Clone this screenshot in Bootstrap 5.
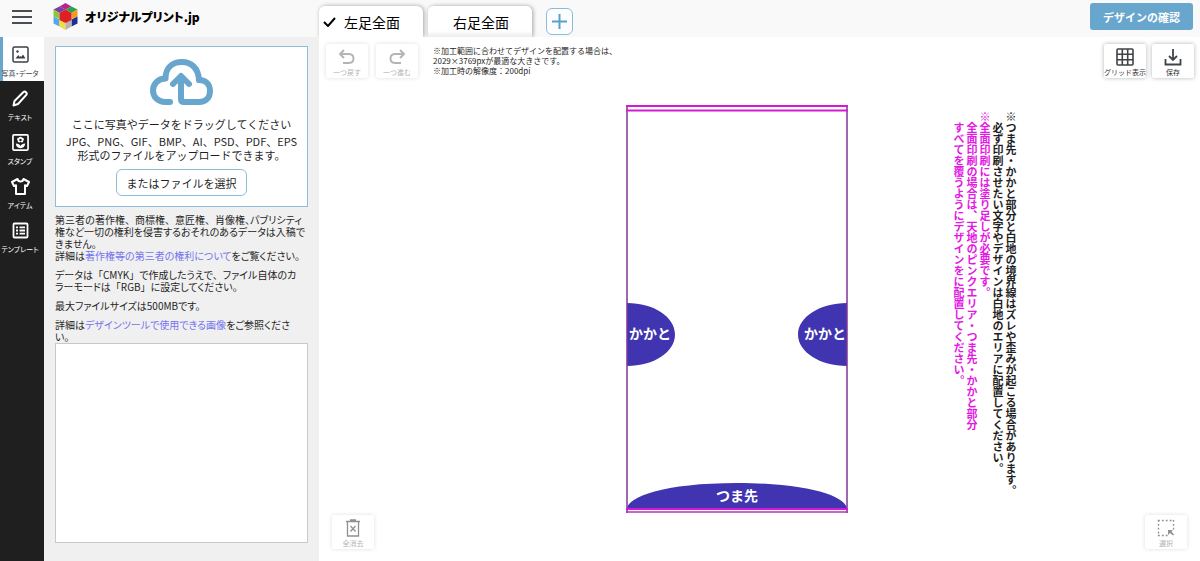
<!DOCTYPE html>
<html lang="ja">
<head>
<meta charset="utf-8">
<meta name="viewport" content="width=device-width, initial-scale=1">
<title>デザインツール | オリジナルプリント.jp</title>
<link href="https://cdn.jsdelivr.net/npm/bootstrap@5.3.0/dist/css/bootstrap.min.css" rel="stylesheet">
<style>
  :root { --accent: #68a6cd; --ink: #1f1f1f; --pink: #e31ae3; }
  body { font-family: "Noto Sans CJK JP", sans-serif; font-size: 11px; line-height: 14px; color: var(--ink); }
  svg { display: block; flex-shrink: 0; }
  button { color: inherit; }
  .topbar { background: #f9f9f9; height: 37px; }
  .brand-side { width: 319px; padding-left: 12px; }
  .brand-name { font-size: 12px; font-weight: 900; line-height: 16px; font-feature-settings: "palt"; color: #000; }
  .menu-btn { width: 20px; height: 14px; margin-top: 10px; }
  .logo-link { margin-left: 21px; margin-top: 3px; gap: 7px; }
  .tab-row { gap: 5px; }
  .design-tab { width: 104px; height: 31px; background: #fff; border: 0; border-radius: 6px 6px 0 0; box-shadow: 1px 0 4px rgba(0,0,0,.35); font-size: 14px; line-height: 20px; padding: 1px 0 0 4px; clip-path: inset(-5px -6px 0 -6px); color: #000; }
  .design-tab[aria-selected="false"] { background: linear-gradient(#fff 80%, #ececec); padding-left: 2px; }
  .add-tab { width: 27px; height: 27px; border: 1px solid #8bbdd9; border-radius: 6px; background: #fbfdfe; margin: 0 0 2px 9px; }
  .confirm-btn { background: var(--accent); color: #fff; font-size: 11px; font-weight: 700; line-height: 14px; width: 103px; height: 27px; border-radius: 3px; margin: 3px 7px 0 0; }
  .confirm-btn:hover { background: #4f93bd; color: #fff; }
  .rail { width: 44px; background: #1f1f1f; }
  .rail-item { height: 44px; padding: 9px 4px 0 0; border: 0; background: none; color: #fff; font-size: 7px; line-height: 9px; font-feature-settings: "palt"; gap: 6px; white-space: nowrap; }
  .rail-item.active { background: #fff; color: #3b3f44; box-shadow: inset 3px 0 var(--accent); }
  .side-panel { width: 275px; background: #f0f0f0; padding: 9px 11px 18px; }
  .drop-zone { background: #fff; border: 1px solid #8dbfd9; height: 161px; padding-top: 11px; }
  .drop-title { margin-top: 11px; }
  .drop-types { margin-top: 3px; white-space: nowrap; }
  .file-btn { width: 131px; height: 27px; border: 1px solid #8dbfd9; border-radius: 6px; background: #fff; margin-top: 7px; }
  .notes { font-size: 10px; line-height: 12px; font-feature-settings: "palt"; padding-top: 7px; white-space: nowrap; }
  .notes p { margin-bottom: 7px; }
  .notes p:last-child { margin-bottom: 0; }
  .notes a { color: #7674ee; text-decoration: none; }
  .full { font-feature-settings: normal; }
  .upload-list { background: #fff; border: 1px solid #c9c9c9; }
  .workspace { background: #fff; padding: 7px 6px 12px 7px; }
  .tool { width: 42px; height: 34px; padding: 4px 0 0; border: 0; border-radius: 2px; background: #fff; box-shadow: 0 0 4px rgba(0,0,0,.3); font-size: 7px; line-height: 9px; gap: 2px; color: #333; white-space: nowrap; }
  .tool:disabled { box-shadow: 0 0 4px rgba(0,0,0,.13); color: #b4b4b4; }
  .tool-save { margin-left: 6px; }
  .bottom-tools { padding: 0 7px 0 6px; }
  .size-note { font-size: 8px; line-height: 10px; padding: 2px 0 0 7px; }
  .stage { padding-left: 123px; gap: 104px; margin-top: 27px; }
  .guide { writing-mode: vertical-rl; font-size: 11px; font-weight: 700; line-height: 13px; white-space: nowrap; padding-top: 6px; }
  .guide p { margin: 0; }
  .hot { color: var(--pink); }
  .board text { font-size: 14px; font-weight: 700; fill: #fff; text-anchor: middle; }
</style>
</head>
<body>
<div class="d-flex flex-column min-vh-100">
  <header class="topbar d-flex">
    <div class="brand-side d-flex align-items-start flex-shrink-0">
      <button class="menu-btn border-0 bg-transparent p-0" aria-label="メニュー">
        <svg width="20" height="14" stroke="#4a4d52" stroke-width="2"><path d="M0 1h20M0 7h20M0 13h20"/></svg>
      </button>
      <a href="#" class="logo-link d-flex align-items-center text-decoration-none">
        <svg width="25" height="27" viewBox="0 0 50 54">
          <path fill="#b5268c" d="M25 0l12 7-12 6-12-6z"/>
          <path fill="#7a3fa0" d="M13 7l12 6-12 7L1 13z"/><path fill="#2ea449" d="M37 7l12 6-12 7-12-7z"/>
          <path fill="#8cc63f" d="M1 13l12 7v12L1 27z"/><path fill="#f39a1e" d="M49 13l-12 7v12l12-5z"/>
          <path fill="#57a9e2" d="M1 27l12 6v14L1 41z"/><path fill="#1c2f8f" d="M49 27l-12 6v14l12-6z"/>
          <path fill="#f3dc3c" d="M13 33l12 7v14l-12-7z"/><path fill="#b8b2b4" d="M37 33l-12 7v14l12-7z"/>
          <path fill="#dd1f26" d="M25 13l12 7v14l-12 6-12-6V20z"/>
        </svg>
        <span class="brand-name">オリジナルプリント.jp</span>
      </a>
    </div>
    <div class="tab-row d-flex align-items-end flex-grow-1" role="tablist" aria-label="印刷面">
      <button class="design-tab d-flex align-items-center" role="tab" aria-selected="true">
        <svg width="13" height="10" fill="none" stroke="#000" stroke-width="2"><path d="M1 5l4 4 7-8"/></svg>
        <span class="ps-2">左足全面</span>
      </button>
      <button class="design-tab" role="tab" aria-selected="false">右足全面</button>
      <button class="add-tab p-0 d-flex align-items-center justify-content-center" aria-label="面を追加">
        <svg width="15" height="15" stroke="#5ba0c8" stroke-width="2"><path d="M7.500 0v15M0 7.500h15"/></svg>
      </button>
    </div>
    <button class="btn confirm-btn border-0 p-0 flex-shrink-0">デザインの確認</button>
  </header>

  <div class="d-flex flex-grow-1">
    <nav class="rail d-flex flex-column flex-shrink-0" aria-label="ツール">
      <button class="rail-item active d-flex flex-column align-items-center">
        <svg width="17" height="17" viewBox="0 0 17 17" fill="none" stroke="currentColor" stroke-width="1.500"><rect x="1" y="1" width="15" height="15" rx="1.500"/><path d="M3.500 12.500h10L11 8.500l-1.800 2.500-.7-1-.8 1L6.300 9z" fill="currentColor" stroke="none"/><circle cx="5.500" cy="5.500" r="1.200" fill="currentColor" stroke="none"/></svg>
        <span>写真・データ</span>
      </button>
      <button class="rail-item d-flex flex-column align-items-center">
        <svg width="17" height="17" viewBox="0 0 17 17" fill="none" stroke="currentColor" stroke-width="2" stroke-linejoin="round"><path d="M1.500 15.500l1-4.500L11.500 2q1.200-1 2.500.2t.3 2.600L6 14z"/></svg>
        <span>テキスト</span>
      </button>
      <button class="rail-item d-flex flex-column align-items-center">
        <svg width="17" height="17" viewBox="0 0 18 18" fill="none" stroke="currentColor" stroke-width="1.800"><rect x="1" y="1" width="16" height="16" rx="1"/><path fill="currentColor" fill-rule="evenodd" stroke="none" d="M9 3q1.300 0 1.700 1.100 1.800-.1 1.900 1.500 0 .8-.7 1.300.4 1.800-1.200 2-.9.100-1.700-.6-.8.700-1.700.6-1.600-.2-1.200-2-.7-.5-.7-1.300.1-1.600 1.900-1.500Q7.700 3 9 3zM9 5a1.300 1.300 0 100 2.600A1.300 1.300 0 009 5z"/><path fill="currentColor" stroke="none" d="M4 10q4 .2 5 2.800Q10 10.200 14 10q-.5 4.800-5 5-4.500-.2-5-5z"/></svg>
        <span>スタンプ</span>
      </button>
      <button class="rail-item d-flex flex-column align-items-center">
        <svg width="19" height="17" viewBox="0 0 19 17" fill="none" stroke="currentColor" stroke-width="2" stroke-linejoin="round"><path d="M6.500 1L1 4l2 4 2-.8V16h9V7.200l2 .8 2-4-5.500-3q-.5 2.500-3 2.500T6.500 1z"/></svg>
        <span>アイテム</span>
      </button>
      <button class="rail-item d-flex flex-column align-items-center">
        <svg width="17" height="17" viewBox="0 0 17 17" fill="none" stroke="currentColor" stroke-width="1.800"><rect x="1.500" y="1.500" width="14" height="14" rx="1"/><path d="M4 5.300h2M7.500 5.300H13M4 8.500h2M7.500 8.500H13M4 11.700h2M7.500 11.700H13"/></svg>
        <span>テンプレート</span>
      </button>
    </nav>

    <aside class="side-panel d-flex flex-column flex-shrink-0">
      <section class="drop-zone d-flex flex-column align-items-center text-center">
        <svg width="64" height="48" viewBox="0 0 64 48" fill="none" stroke="#68a6cd" stroke-width="6" stroke-linecap="round" stroke-linejoin="round"><path d="M20 44H15C8 44 3 39 3 32.500S8 20.500 15.500 20.500C15.500 10 22 4 32 4S48.500 11 49 22C56 22 60 26.500 60 33S56 44 49 44H34Q31 44 31 41V19M23 26l8-8L39 26"/></svg>
        <div class="drop-title">ここに写真やデータをドラッグしてください</div>
        <div class="drop-types">JPG、PNG、GIF、BMP、AI、PSD、PDF、EPS<br>形式のファイルをアップロードできます。</div>
        <button class="file-btn p-0">またはファイルを選択</button>
      </section>
      <div class="notes">
        <p><span class="full">第三者の著作権、商標権、意匠権、</span>肖像権、パブリシティ<br>権など一切の権利を侵害するおそれのあるデータは入稿で<br>きません。<br>詳細は<a href="#">著作権等の第三者の権利について</a>をご覧ください。</p>
        <p>データは<span class="full">「CMYK」</span>で作成したうえで<span class="full">、</span>ファイル自体のカ<br>ラーモードは<span class="full">「RGB」</span>に設定してください。</p>
        <p>最大ファイルサイズは500MBです。</p>
        <p>詳細は<a href="#">デザインツールで使用できる画像</a>をご参照くださ<br>い。</p>
      </div>
      <div class="upload-list flex-grow-1"></div>
    </aside>

    <main class="workspace d-flex flex-column flex-grow-1">
      <div class="d-flex align-items-start">
        <button class="tool d-flex flex-column align-items-center" disabled>
          <svg width="18" height="18" viewBox="0 0 18 18" fill="none" stroke="currentColor" stroke-width="1.900"><path d="M6 2L2 6l4 4M2.500 6H11q4.500.2 4.500 4.500T11 15H5"/></svg>
          <span>一つ戻す</span>
        </button>
        <button class="tool d-flex flex-column align-items-center ms-2" disabled>
          <svg width="18" height="18" viewBox="0 0 18 18" fill="none" stroke="currentColor" stroke-width="1.900"><path d="M12 2l4 4-4 4M15.500 6H7q-4.500.2-4.500 4.500T7 15h6"/></svg>
          <span>一つ進む</span>
        </button>
        <div class="size-note ms-2">※加工範囲に合わせてデザインを配置する場合は、<br>2029×3769pxが最適な大きさです。<br>※加工時の解像度：200dpi</div>
        <button class="tool d-flex flex-column align-items-center ms-auto">
          <svg width="18" height="18" viewBox="0 0 18 18" fill="none" stroke="#3f4347" stroke-width="1.600"><rect x="1" y="1" width="16" height="16" rx="1"/><path d="M6.300 1v16M11.700 1v16M1 6.300h16M1 11.700h16"/></svg>
          <span>グリッド表示</span>
        </button>
        <button class="tool tool-save d-flex flex-column align-items-center">
          <svg width="18" height="18" viewBox="0 0 18 18" fill="none" stroke="#3f4347" stroke-width="1.800"><path d="M9 1v10.500M5 8l4 4 4-4M1.500 11v5.500h15V11"/></svg>
          <span>保存</span>
        </button>
      </div>

      <div class="stage d-flex justify-content-center flex-grow-1">
        <svg class="board" width="222" height="408" viewBox="0 0 222 408" role="img" aria-label="左足全面のデザイン範囲">
          <path fill="#4034b0" d="M1 198C28 198 49 212 49 229.500S28 261 1 261zM221 198C194 198 172 212 172 229.500S194 261 221 261zM1 404C1 392 38 378 111 378S221 392 221 404z"/>
          <path fill="none" stroke="#7d3795" stroke-width="1.500" d="M1 0v408M221 0v408"/>
          <path fill="none" stroke="#d419d4" stroke-width="2" d="M0 1h222M0 5.500h222M0 404h222"/>
          <path stroke="#b235b8" stroke-width="1.500" d="M0 407h222"/>
          <text x="24" y="234">かかと</text>
          <text x="199" y="234">かかと</text>
          <text x="111" y="396">つま先</text>
        </svg>
        <div class="guide">
          <p>※つま先・かかと部分と白地の境界線はズレや歪みが起こる場合があります。</p>
          <p>　必ず印刷させたい文字やデザインは白地のエリアに配置してください。</p>
          <p class="hot">※全面印刷には塗り足しが必要です。</p>
          <p class="hot">　全面印刷の場合は、天地のピンクエリア・つま先・かかと部分<br>　すべてを覆うようにデザインをに配置してください。</p>
        </div>
      </div>

      <div class="bottom-tools d-flex justify-content-between">
        <button class="tool d-flex flex-column align-items-center" disabled>
          <svg width="18" height="18" viewBox="0 0 18 18" fill="none" stroke="#909090" stroke-width="1.300"><path d="M2 2.500h14M6 1h6M3.500 2.500V17h11V2.500M6.500 7l5 5.500M11.500 7l-5 5.500"/></svg>
          <span>全消去</span>
        </button>
        <button class="tool d-flex flex-column align-items-center" disabled>
          <svg width="18" height="18" viewBox="0 0 18 18" fill="none" stroke="#909090" stroke-width="1.400"><path stroke-dasharray="1.800 2.100" d="M1 1.500h16M1.500 1v16M16.500 1v11M1 16.500h11"/><path fill="#909090" stroke="none" d="M11 11h5l-1.500 1.500 2.500 3-1 1-3-2.500L11 16z"/></svg>
          <span>選択</span>
        </button>
      </div>
    </main>
  </div>
</div>
<script src="https://cdn.jsdelivr.net/npm/bootstrap@5.3.0/dist/js/bootstrap.bundle.min.js"></script>
</body>
</html>
